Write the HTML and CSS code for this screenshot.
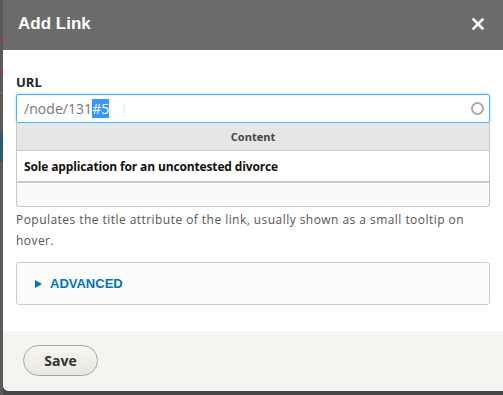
FILE: index.html
```html
<!DOCTYPE html>
<html>
<head>
<meta charset="utf-8">
<link rel="stylesheet" href="styles.css">
</head>
<body>
<div class="page">
  <div class="backdrop-strip">
    <span class="bit bit-red"></span>
    <span class="bit bit-red2"></span>
    <span class="bit bit-green"></span>
    <span class="bit bit-blue"></span>
  </div>
  <div class="dialog">
    <div class="titlebar">
      <span class="title">Add Link</span>
      <span class="close">
        <svg width="12" height="12" viewBox="0 0 12 12"><path d="M1.5 1.5 L10.5 10.5 M10.5 1.5 L1.5 10.5" stroke="#fff" stroke-width="2.6" stroke-linecap="square"/></svg>
      </span>
    </div>
    <div class="content">
      <label class="label">URL</label>
      <div class="url-input">
        <span class="url-text">/node/131<span class="sel">#5</span></span>
        <span class="ibeam">I</span>
        <span class="throbber"></span>
      </div>
      <div class="autocomplete">
        <div class="ac-head">Content</div>
        <div class="ac-row">Sole application for an uncontested divorce</div>
      </div>
      <div class="title-input"></div>
      <div class="description">Populates the title attribute of the link, usually shown as a small tooltip on hover.</div>
      <div class="details">
        <span class="arrow"></span>
        <span class="summary">ADVANCED</span>
      </div>
    </div>
    <div class="footer">
      <button class="btn">Save</button>
    </div>
  </div>
</div>
</body>
</html>
```
FILE: styles.css
```css
html, body {
  margin: 0;
  padding: 0;
  background: #4a4a4a;
}
.page {
  display: flex;
  width: 503px;
  height: 395px;
  overflow: hidden;
  background: #474747;
}
.backdrop-strip {
  width: 3px;
  flex: none;
  position: relative;
  background: #5a5a5a;
}
.bit {
  position: absolute;
  left: 0;
  width: 3px;
  height: 2px;
}
.bit-red { top: 40px; background: #a83232; }
.bit-red2 { top: 72px; background: #a83232; }
.bit-green { top: 92px; background: #3a8a3a; }
.bit-blue { top: 132px; height: 30px; background: #285a78; }
.dialog {
  width: 500px;
  height: 391px;
  display: flex;
  flex-direction: column;
  background: #fff;
  border-bottom-left-radius: 6px;
  overflow: hidden;
}
.titlebar {
  height: 50px;
  flex: none;
  background: #6b6b6b;
  display: flex;
  align-items: center;
  justify-content: space-between;
  padding: 0 19px 0 15px;
}
.title {
  color: #fff;
  font-family: "Liberation Sans", Arial, sans-serif;
  font-weight: bold;
  font-size: 17px;
  padding-bottom: 2px;
}
.close {
  display: flex;
  padding-bottom: 2px;
}
.content {
  flex: 1;
  padding: 24px 13px 0 13px;
  font-family: "Open Sans", sans-serif;
  color: #333;
}
.label {
  display: block;
  font-weight: bold;
  font-size: 13px;
  color: #222;
  line-height: 17px;
  margin-bottom: 3px;
}
.url-input {
  height: 27px;
  border: 1px solid #40b6ff;
  box-shadow: 0 0 3px #9dd5ff;
  border-radius: 2px;
  display: flex;
  align-items: center;
  padding: 0 5px 0 7px;
  font-size: 14px;
  color: #777;
  letter-spacing: 0.05px;
}
.url-text { line-height: 19px; }
.sel {
  background: #3399ff;
  color: #fff;
}
.ibeam {
  margin-left: 13px;
  color: #ddd;
  font-weight: 300;
  font-size: 15px;
  flex: 1;
}
.throbber {
  width: 9px;
  height: 9px;
  border: 2px solid #aaa;
  border-radius: 50%;
}
.autocomplete {
  border: 1px solid #c8c8c8;
  border-top: none;
}
.ac-head {
  height: 27px;
  background: #e6e6e6;
  border-bottom: 1px solid #c8c8c8;
  display: flex;
  align-items: center;
  justify-content: center;
  font-size: 11px;
  font-weight: bold;
  color: #444;
}
.ac-row {
  height: 30px;
  display: flex;
  align-items: center;
  padding-left: 7px;
  font-size: 12px;
  font-weight: bold;
  color: #111;
  letter-spacing: -0.14px;
}
.title-input {
  height: 23px;
  background: #fafaf9;
  border: 1px solid #c8c8c8;
  border-top-color: #ccc;
  border-radius: 0 0 3px 3px;
}
.description {
  margin-top: 2px;
  font-size: 12px;
  line-height: 21px;
  color: #555;
  letter-spacing: 0.45px;
}
.details {
  margin-top: 11px;
  height: 41px;
  border: 1px solid #ccc;
  border-radius: 3px;
  background: #fcfcfa;
  display: flex;
  align-items: center;
  padding-left: 18px;
}
.arrow {
  width: 0;
  height: 0;
  border-left: 7px solid #0074bd;
  border-top: 4px solid transparent;
  border-bottom: 4px solid transparent;
  margin-right: 8px;
}
.summary {
  font-family: "Liberation Sans", Arial, sans-serif;
  font-weight: bold;
  font-size: 13px;
  color: #0074bd;
}
.footer {
  height: 60px;
  flex: none;
  background: #f4f4f0;
  display: flex;
  align-items: center;
  padding-left: 20px;
}
.btn {
  width: 75px;
  height: 31px;
  border: 1px solid #a6a6a6;
  border-radius: 16px;
  background: linear-gradient(#f6f5f0, #e8e7df);
  font-family: "Open Sans", sans-serif;
  font-weight: bold;
  font-size: 14px;
  color: #333;
  padding: 0;
  margin-bottom: 1px;
}
```
